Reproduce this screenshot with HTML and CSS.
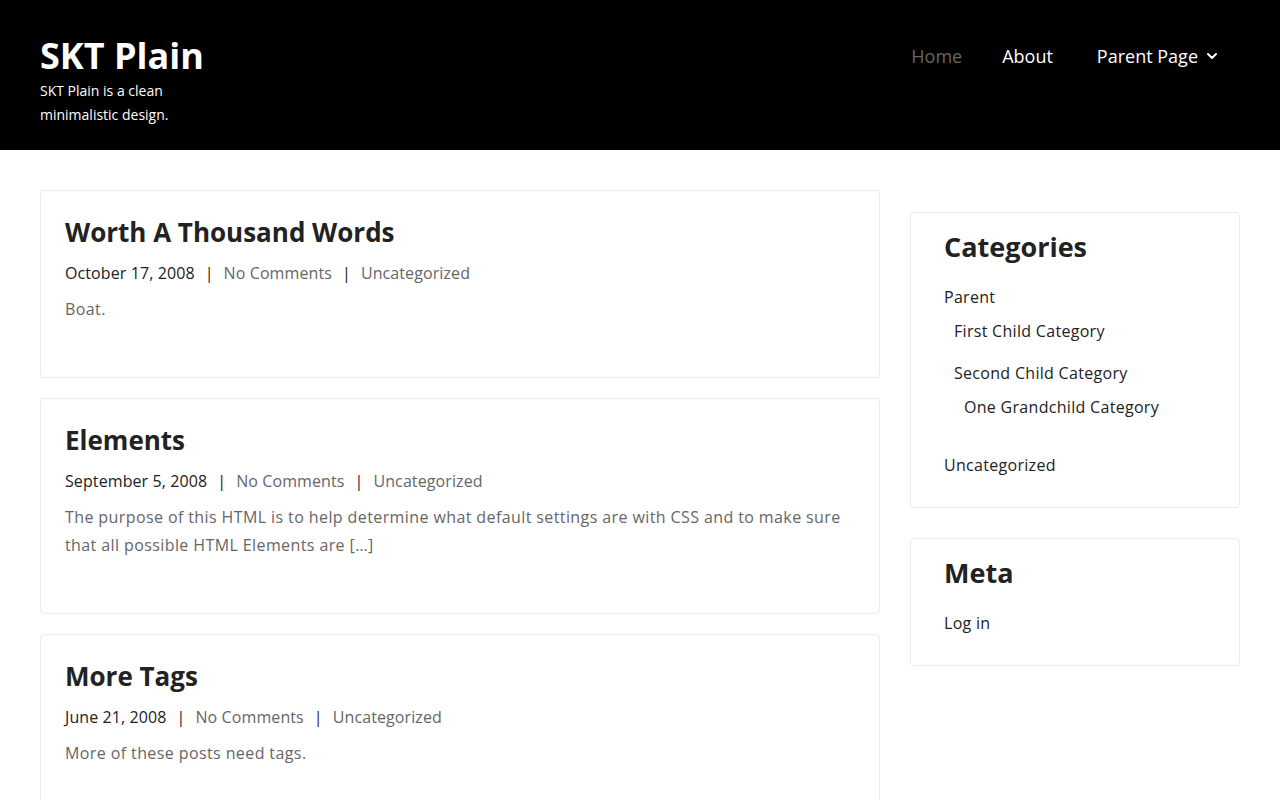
FILE: index.html
```html
<!DOCTYPE html>
<html lang="en">
<head>
    <meta charset="UTF-8">
    <meta name="viewport" content="width=device-width, initial-scale=1.0">
    <title>SKT Plain</title>
    <link rel="stylesheet" href="styles.css">
</head>
<body>
    <header class="site-header">
        <div class="branding">
            <a class="site-title" href="#">SKT Plain</a>
            <p class="site-description">SKT Plain is a clean minimalistic design.</p>
        </div>
        <nav class="main-nav">
            <ul>
                <li><a class="current" href="#">Home</a></li>
                <li><a href="#">About</a></li>
                <li>
                    <a href="#">Parent Page
                        <svg class="caret" width="12" height="12" viewBox="0 0 12 12" aria-hidden="true">
                            <polyline points="2,4 6,8 10,4" fill="none" stroke="#fff" stroke-width="2" stroke-linecap="round" stroke-linejoin="round"/>
                        </svg>
                    </a>
                </li>
            </ul>
        </nav>
    </header>

    <div class="site-content">
        <main class="posts">
            <article class="post">
                <h2 class="entry-title"><a href="#">Worth A Thousand Words</a></h2>
                <div class="entry-meta">
                    <span class="date">October 17, 2008</span><span class="sep">|</span><a href="#">No Comments</a><span class="sep">|</span><a href="#">Uncategorized</a>
                </div>
                <div class="entry-summary"><p>Boat.</p></div>
            </article>

            <article class="post">
                <h2 class="entry-title"><a href="#">Elements</a></h2>
                <div class="entry-meta">
                    <span class="date">September 5, 2008</span><span class="sep">|</span><a href="#">No Comments</a><span class="sep">|</span><a href="#">Uncategorized</a>
                </div>
                <div class="entry-summary"><p>The purpose of this HTML is to help determine what default settings are with CSS and to make sure that all possible HTML Elements are [&hellip;]</p></div>
            </article>

            <article class="post">
                <h2 class="entry-title"><a href="#">More Tags</a></h2>
                <div class="entry-meta">
                    <span class="date">June 21, 2008</span><span class="sep">|</span><a href="#">No Comments</a><span class="sep">|</span><a href="#">Uncategorized</a>
                </div>
                <div class="entry-summary"><p>More of these posts need tags.</p></div>
            </article>
        </main>

        <aside class="sidebar">
            <section class="widget">
                <h3 class="widget-title">Categories</h3>
                <ul class="cat-list">
                    <li><a href="#">Parent</a>
                        <ul class="children">
                            <li><a href="#">First Child Category</a></li>
                            <li><a href="#">Second Child Category</a>
                                <ul class="children">
                                    <li><a href="#">One Grandchild Category</a></li>
                                </ul>
                            </li>
                        </ul>
                    </li>
                    <li><a href="#">Uncategorized</a></li>
                </ul>
            </section>

            <section class="widget">
                <h3 class="widget-title">Meta</h3>
                <ul class="cat-list">
                    <li><a href="#">Log in</a></li>
                </ul>
            </section>
        </aside>
    </div>
</body>
</html>
```

FILE: styles.css
```css
body {
    margin: 0;
    font-family: 'Open Sans', 'Liberation Sans', sans-serif;
    color: #222;
    background-color: #fff;
    font-size: 16px;
    line-height: 1.5;
}

a {
    text-decoration: none;
    color: inherit;
}

ul {
    list-style: none;
    margin: 0;
    padding: 0;
}

/* header */
.site-header {
    background-color: #000;
    height: 150px;
    box-sizing: border-box;
    padding: 34px 40px 0;
    display: flex;
    justify-content: space-between;
    align-items: flex-start;
}

.site-title {
    display: block;
    color: #fff;
    font-size: 36px;
    font-weight: 700;
    line-height: 43px;
}

.site-description {
    color: #fff;
    font-size: 14px;
    line-height: 24px;
    margin: 2px 0 0;
    max-width: 150px;
}

.main-nav ul {
    display: flex;
    gap: 40px;
    margin-top: 7px;
}

.main-nav li:last-child {
    margin-left: 4px;
    margin-right: 22px;
}

.main-nav a {
    display: flex;
    align-items: center;
    gap: 8px;
    color: #fff;
    font-size: 18px;
    font-weight: 500;
    line-height: 30px;
}

.main-nav a.current {
    color: #666;
    font-weight: 400;
}

/* content */
.site-content {
    display: flex;
    gap: 30px;
    padding: 40px 40px 0;
    align-items: flex-start;
}

.posts {
    flex: 1;
    display: flex;
    flex-direction: column;
    gap: 20px;
}

.post {
    border: 1px solid #ececec;
    border-radius: 4px;
    padding: 24px;
}

.entry-title {
    margin: 0 0 12px;
    font-size: 26px;
    font-weight: 700;
    line-height: 34px;
    color: #222;
}

.entry-meta {
    font-size: 16px;
    line-height: 24px;
    color: #222;
    letter-spacing: 0.1px;
}

.entry-meta a {
    color: #666;
}

.entry-meta .sep {
    margin: 0 10px;
}

.entry-summary p {
    margin: 10px 0 30px;
    color: #666;
    line-height: 28px;
    letter-spacing: 0.4px;
}

/* sidebar */
.sidebar {
    width: 330px;
    margin-top: 22px;
    display: flex;
    flex-direction: column;
    gap: 30px;
}

.widget {
    border: 1px solid #ececec;
    border-radius: 4px;
    padding: 17px 33px 22px;
}

.widget-title {
    margin: 0 0 21px;
    font-size: 27px;
    font-weight: 700;
    line-height: 34px;
}

.cat-list li {
    margin-top: 10px;
    padding-bottom: 8px;
    line-height: 24px;
    letter-spacing: 0.3px;
}

.cat-list .children {
    padding-left: 10px;
}
```
